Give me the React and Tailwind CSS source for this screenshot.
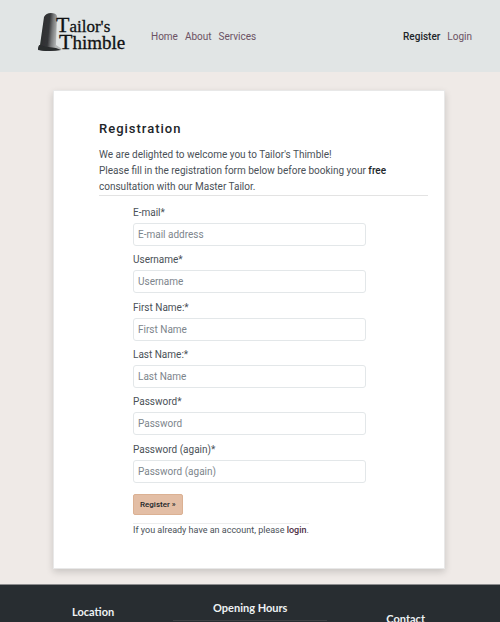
import React from "react";

const FIELDS = [
  { id: "email", label: "E-mail*", placeholder: "E-mail address", type: "email" },
  { id: "username", label: "Username*", placeholder: "Username", type: "text" },
  { id: "first-name", label: "First Name:*", placeholder: "First Name", type: "text" },
  { id: "last-name", label: "Last Name:*", placeholder: "Last Name", type: "text" },
  { id: "password", label: "Password*", placeholder: "Password", type: "password" },
  { id: "password-again", label: "Password (again)*", placeholder: "Password (again)", type: "password" },
];

function Logo() {
  return (
    <svg width="92" height="44" viewBox="0 0 92 44" role="img" aria-label="Tailor's Thimble">
      <defs>
        <linearGradient id="thimble" x1="0" x2="1" y1="0" y2="0.15">
          <stop offset="0.1" stopColor="#2b2d2f" />
          <stop offset="0.5" stopColor="#343638" />
          <stop offset="0.65" stopColor="#77797a" />
          <stop offset="0.85" stopColor="#b4b7b7" />
        </linearGradient>
        <filter id="soft" x="-20%" y="-20%" width="140%" height="140%">
          <feGaussianBlur stdDeviation="0.7" />
        </filter>
      </defs>
      <g filter="url(#soft)">
        <path d="M8 6 Q10 2 15 2 Q20 2 21 5 L20 34 L26 38 Q24 40 15 40 Q3 40 2 38 Q2 35 4 34 Z" fill="url(#thimble)" />
        <path d="M3 34 Q10 36 20 37 L25 39 Q14 41 2 39 Z" fill="#2b2d2f" />
      </g>
      <g fill="#101214" stroke="#101214" strokeWidth="0.3" fontSize="22" fontFamily="'Liberation Serif', serif">
        <text x="20" y="21">T<tspan fontSize="17">ailor's</tspan></text>
        <text x="23" y="38">T<tspan fontSize="19">himble</tspan></text>
      </g>
    </svg>
  );
}

function Header() {
  return (
    <header className="flex h-18 items-center bg-[#e1e5e5] pr-7 pl-9 text-[10px] text-[#6b5263]">
      <a href="#home" className="mt-[-6px] mr-[23px]"><Logo /></a>
      <nav className="flex flex-1 gap-[7px]">
        <a href="#home">Home</a>
        <a href="#about">About</a>
        <a href="#services">Services</a>
        <a href="#register" className="ml-auto font-medium text-[#212529]">Register</a>
        <a href="#login">Login</a>
      </nav>
    </header>
  );
}

function Field({ id, label, placeholder, type }) {
  return (
    <div>
      <label htmlFor={id} className="mb-[2px] block h-4 text-[10px] leading-4">{label}</label>
      <input
        id={id}
        type={type}
        placeholder={placeholder}
        className="block h-[23px] w-full rounded-[3px] border border-[#e3e7e9] bg-white px-1 text-[10px] placeholder:text-[#7d858c]"
      />
    </div>
  );
}

export default function App() {
  return (
    <div className="h-screen overflow-hidden bg-[#efeae7] font-['Roboto',sans-serif] text-[#4a5157]">
      <Header />
      <main className="mt-[18px] mr-[55px] mb-[15px] ml-[53px] border border-[#e8e8e8] bg-white pt-[30px] pr-4 pb-8 pl-[45px] shadow-[0_3px_7px_rgba(0,0,0,0.16)]">
        <h1 className="text-[13px] leading-4 font-medium tracking-[1px] text-[#212529]">Registration</h1>
        <p className="mt-[10px] border-b border-[#e3e3e3] text-[10px] leading-4">
          We are delighted to welcome you to Tailor's Thimble!<br />
          Please fill in the registration form below before booking your <strong className="font-medium text-[#212529]">free</strong><br />
          consultation with our Master Tailor.
        </p>
        <form className="mt-[9px] mr-[62px] ml-[34px]" onSubmit={(e) => e.preventDefault()}>
          <div className="grid h-[284px] grid-rows-6">
            {FIELDS.map((f) => <Field key={f.id} {...f} />)}
          </div>
          <button type="submit" className="mt-[5px] block h-[21px] rounded-[2px] border border-[#dbb193] bg-[#e3bea5] px-[6px] text-[8px] font-medium text-[#212529]">
            Register »
          </button>
          <p className="mt-2 w-fit border-t border-[#ededed] text-[9px] leading-3">
            If you already have an account, please <a href="#login" className="font-medium text-[#4c2f45]">login</a>.
          </p>
        </form>
      </main>
      <footer className="flex h-40 justify-between border-t border-[#8c8c8e] bg-[#282d31] pr-[75px] pl-[72px] font-['Lato',sans-serif] text-[11px] leading-4 font-bold text-[#eef2f4]">
        <h2 className="pt-[19px]">Location</h2>
        <h2 className="h-fit border-b border-[#3d4043] px-10 pt-[15px] pb-1">Opening Hours</h2>
        <h2 className="pt-[26px]">Contact</h2>
      </footer>
    </div>
  );
}
